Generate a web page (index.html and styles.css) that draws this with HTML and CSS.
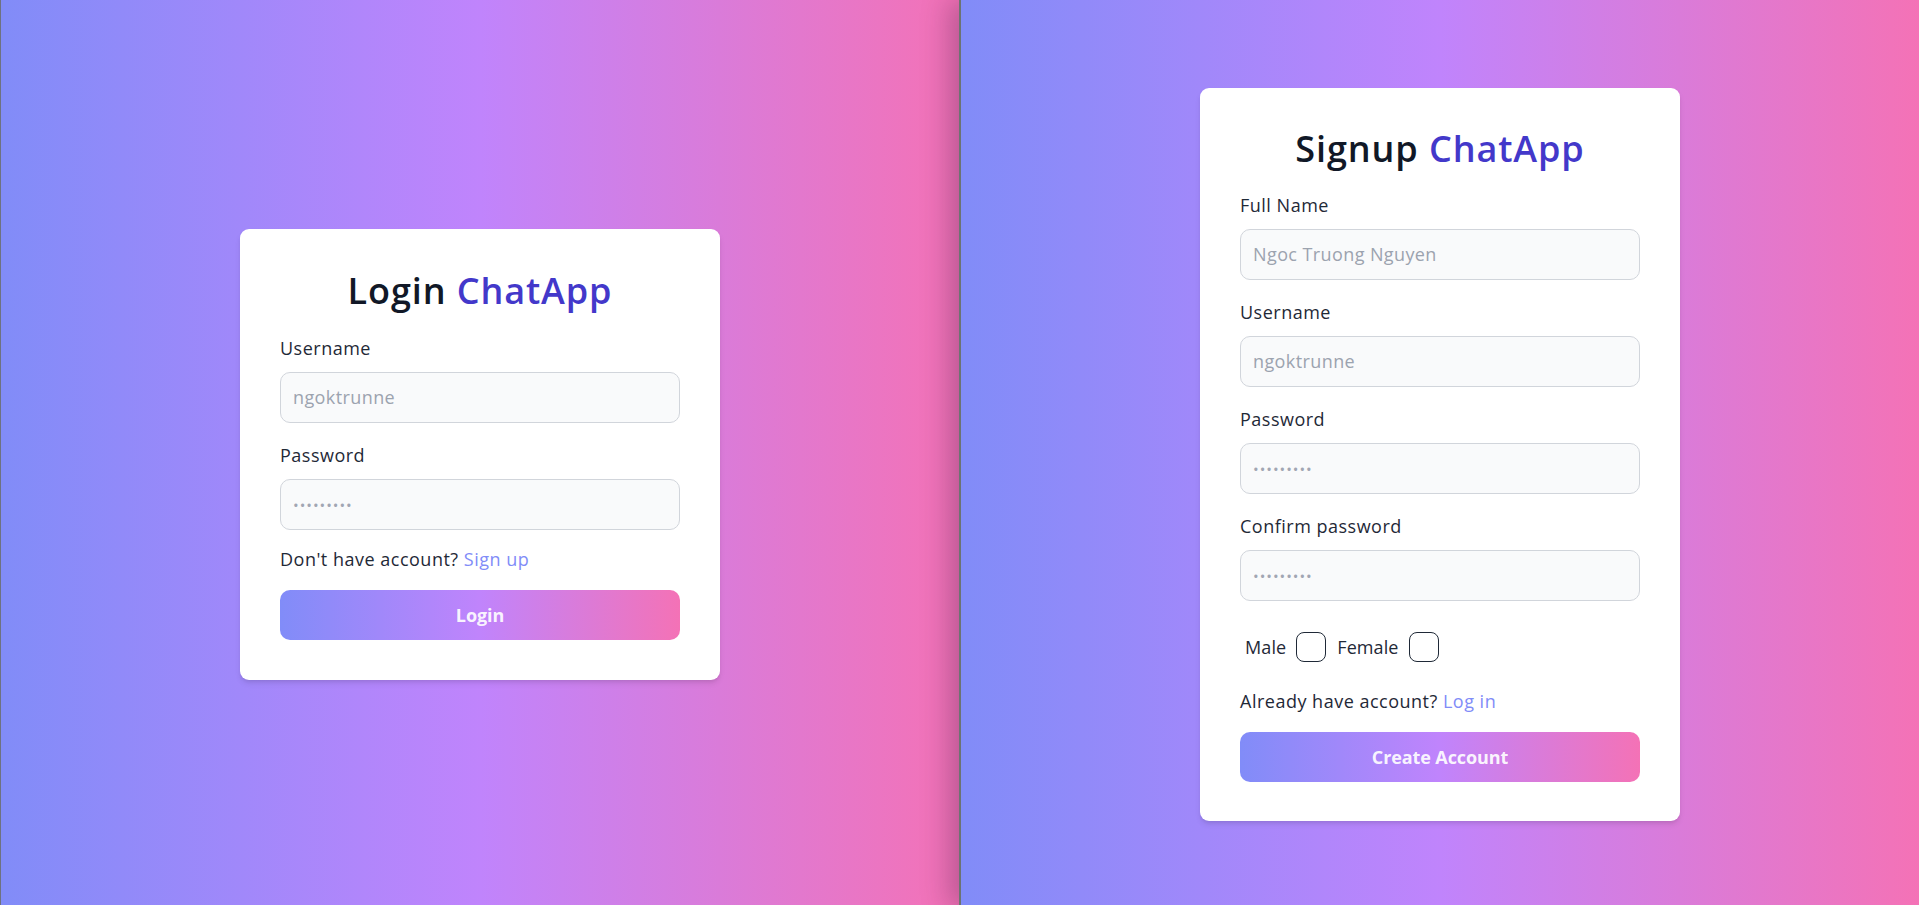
FILE: index.html
```html
<!DOCTYPE html>
<html lang="en">
<head>
<meta charset="utf-8">
<title>ChatApp</title>
<link rel="stylesheet" href="styles.css">
</head>
<body>
<div class="screen">
  <section class="pane pane-left">
    <form class="card">
      <h1 class="title">Login <span class="brand">ChatApp</span></h1>
      <div class="field">
        <label class="label">Username</label>
        <input class="input" type="text" placeholder="ngoktrunne">
      </div>
      <div class="field field-last">
        <label class="label">Password</label>
        <input class="input input-pass" type="password" placeholder="•••••••••">
      </div>
      <p class="switch">Don't have account? <a class="link" href="#">Sign up</a></p>
      <button class="btn" type="button">Login</button>
    </form>
  </section>
  <section class="pane pane-right">
    <form class="card card-signup">
      <h1 class="title title-signup">Signup <span class="brand">ChatApp</span></h1>
      <div class="field">
        <label class="label">Full Name</label>
        <input class="input" type="text" placeholder="Ngoc Truong Nguyen">
      </div>
      <div class="field">
        <label class="label">Username</label>
        <input class="input" type="text" placeholder="ngoktrunne">
      </div>
      <div class="field">
        <label class="label">Password</label>
        <input class="input input-pass" type="password" placeholder="•••••••••">
      </div>
      <div class="field">
        <label class="label">Confirm password</label>
        <input class="input input-pass" type="password" placeholder="•••••••••">
      </div>
      <div class="gender">
        <label class="opt"><span>Male</span><span class="box"></span></label>
        <label class="opt"><span>Female</span><span class="box"></span></label>
      </div>
      <p class="switch">Already have account? <a class="link" href="#">Log in</a></p>
      <button class="btn" type="button">Create Account</button>
    </form>
  </section>
</div>
</body>
</html>
```
FILE: styles.css
```css
* { box-sizing: border-box; }
html, body { margin: 0; padding: 0; }
body {
  overflow: hidden;
  font-family: "Open Sans", "Noto Sans", sans-serif;
  color: #1f2937;
}
.screen {
  display: flex;
  height: 908px;
}
.pane {
  display: flex;
  align-items: center;
  justify-content: center;
  background: linear-gradient(to right, #818cf8, #c084fc, #f472b6);
}
.pane-left {
  width: 959px;
  border-left: 1px solid #6e7280;
}
.pane-right {
  flex: 1;
  border-left: 2px solid #6c7372;
  box-shadow: -10px 0 26px rgba(40, 20, 60, 0.28);
  position: relative;
  z-index: 1;
}
.card {
  width: 480px;
  background: #ffffff;
  border-radius: 9px;
  padding: 40px;
  box-shadow: 0 4px 6px -1px rgba(0,0,0,0.1), 0 2px 4px -2px rgba(0,0,0,0.1);
}
.card-signup { padding-top: 39px; padding-bottom: 39px; }
.title {
  margin: 0 0 23px;
  font-size: 36px;
  line-height: 44px;
  font-weight: 600;
  text-align: center;
  color: #111827;
  letter-spacing: 0.9px;
}
.title-signup { margin-bottom: 22px; }
.brand { color: #4338ca; }
.field {
  display: flex;
  flex-direction: column;
  margin-bottom: 20px;
}
.field-last { margin-bottom: 17px; }
.label {
  font-size: 18px;
  line-height: 24px;
  margin-bottom: 12px;
  color: #1f2937;
  letter-spacing: 0.5px;
}
.input {
  height: 51px;
  width: 100%;
  padding: 0 12px;
  font-family: inherit;
  font-size: 18px;
  letter-spacing: 0.4px;
  color: #1f2937;
  background: #f9fafb;
  border: 1px solid #d1d5db;
  border-radius: 10px;
  outline: none;
}
.input::placeholder { color: #9ca3af; }
.input-pass::placeholder { font-size: 15px; letter-spacing: 1px; color: #a1a6b3; }
.switch {
  margin: 0 0 19px;
  font-size: 18px;
  line-height: 24px;
  color: #1f2937;
  letter-spacing: 0.5px;
}
.link {
  color: #818cf8;
  text-decoration: none;
}
.gender {
  display: flex;
  align-items: center;
  gap: 11px;
  padding: 11px 5px 0;
  margin-bottom: 27px;
}
.opt {
  display: flex;
  align-items: center;
  gap: 10px;
  font-size: 18px;
  line-height: 24px;
  letter-spacing: 0.1px;
}
.box {
  width: 30px;
  height: 30px;
  border: 1.5px solid #1f2937;
  border-radius: 8px;
  background: #fff;
}
.btn {
  display: block;
  width: 100%;
  height: 50px;
  border: 0;
  border-radius: 10px;
  background: linear-gradient(to right, #818cf8, #c084fc, #f472b6);
  color: rgba(255, 255, 255, 0.93);
  font-family: inherit;
  font-size: 18px;
  font-weight: 700;
  letter-spacing: -0.1px;
  cursor: pointer;
}
```
